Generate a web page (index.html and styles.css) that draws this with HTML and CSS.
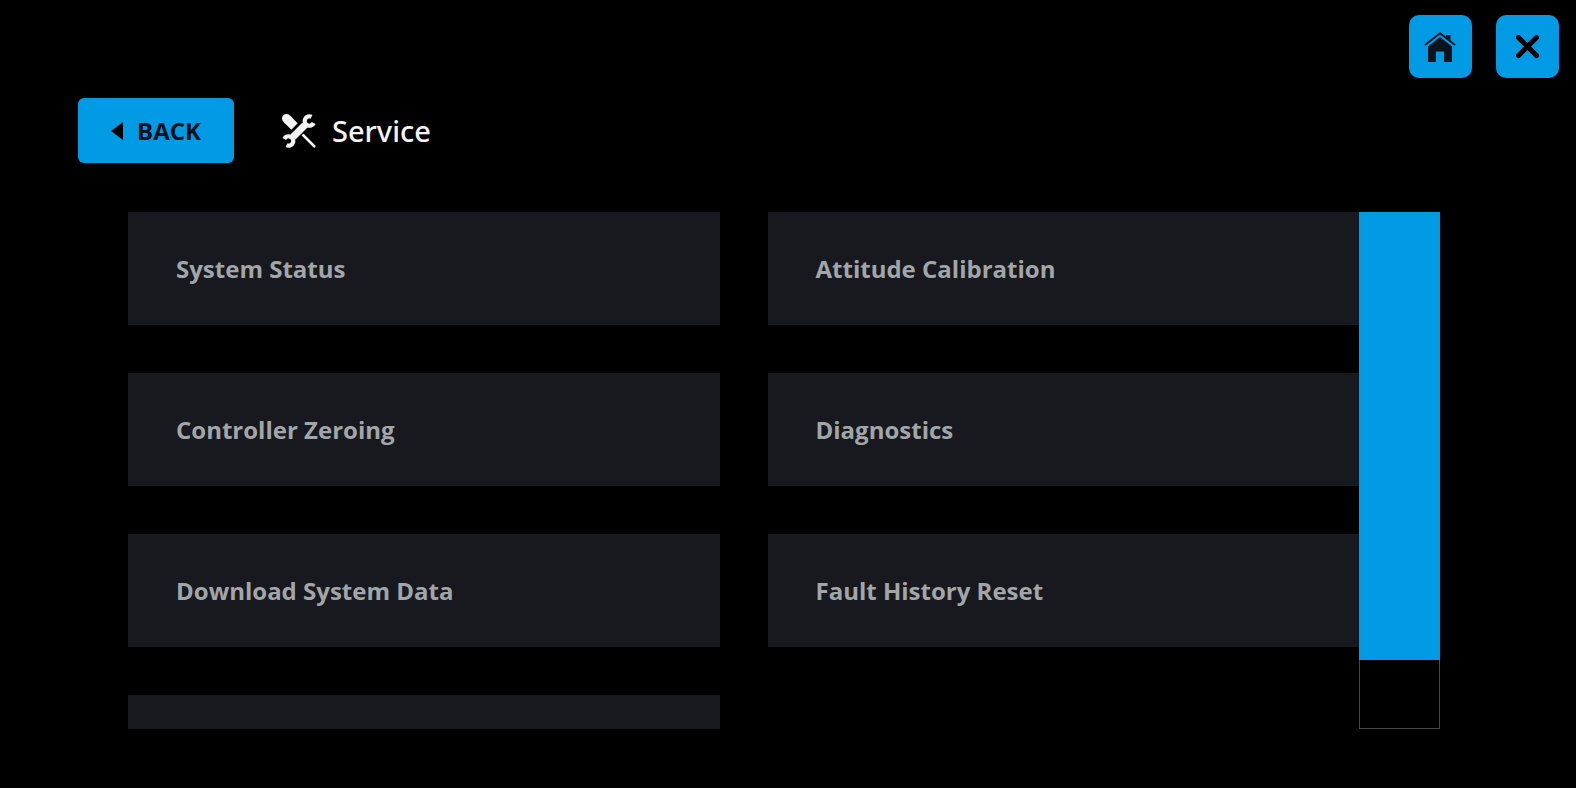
FILE: index.html
```html
<!DOCTYPE html>
<html lang="en">
<head>
<meta charset="utf-8">
<meta name="viewport" content="width=device-width, initial-scale=1">
<title>Service</title>
<link rel="stylesheet" href="styles.css">
</head>
<body class="screen">
<nav class="topbar">
  <button class="icon-button" type="button" aria-label="Home">
    <svg class="home-icon" viewBox="0 0 32 30" aria-hidden="true">
      <path d="M21 3h4.500v7L21 6z"/>
      <path d="M3 14.500 15 5l12 9.500V30h-8V19.500h-8V30H3z"/>
      <path class="roof" d="M0 13 15 1.200 30 13"/>
    </svg>
  </button>
  <button class="icon-button" type="button" aria-label="Close">
    <svg class="close-icon" viewBox="0 0 24 24" aria-hidden="true"><path d="M2.500 2.500l18 18M20.500 2.500l-18 18"/></svg>
  </button>
</nav>
<header class="header">
  <button class="back" type="button">
    <svg class="back-icon" viewBox="0 0 12 18" aria-hidden="true"><path d="M12 0v18L0 9z"/></svg>
    BACK
  </button>
  <h1 class="title">
    <svg class="tools-icon" viewBox="0 0 34 34" aria-hidden="true">
      <path class="handle" d="M4.500 4.500l2 2"/>
      <path class="handle-end" d="M5 5l7.500 7.500"/>
      <path class="blade" d="M18 18l15 15"/>
      <path class="gap" d="M10 24 24 10"/>
      <path class="wrench" d="M11 23l12-12"/>
      <path class="jaw" d="M29.500 2.800a4.700 4.700 0 1 0 2.200 6.200"/>
      <path class="jaw" d="M2.300 25a4.700 4.700 0 1 1 2.200 6.200"/>
    </svg>
    Service
  </h1>
</header>
<main class="panel">
  <div class="list">
    <button class="card" type="button">System Status</button>
    <button class="card" type="button">Attitude Calibration</button>
    <button class="card" type="button">Controller Zeroing</button>
    <button class="card" type="button">Diagnostics</button>
    <button class="card" type="button">Download System Data</button>
    <button class="card" type="button">Fault History Reset</button>
    <div class="card"></div>
  </div>
  <div class="scrollbar"><div class="thumb"></div></div>
</main>
</body>
</html>
```
FILE: styles.css
```css
* { box-sizing: border-box; }

.screen {
  margin: 0;
  height: 100vh;
  display: flex;
  flex-direction: column;
  background: #000;
  color: #f5f5f5;
  font-family: "Open Sans", "Noto Sans", sans-serif;
}

button {
  border: 0;
  font-family: inherit;
  cursor: pointer;
}

.topbar {
  display: flex;
  justify-content: flex-end;
  gap: 24px;
  padding: 15px 17px 20px;
}

.icon-button {
  display: flex;
  align-items: center;
  justify-content: center;
  width: 63px;
  height: 63px;
  padding: 0;
  border-radius: 10px;
  background: #009ae5;
}

.home-icon { width: 32px; height: 30px; fill: #0c141b; overflow: visible; }
.roof { fill: none; stroke: #0c141b; stroke-width: 1.800; }
.close-icon { width: 24px; height: 24px; stroke: #000; stroke-width: 5; stroke-linecap: round; }

.header {
  display: flex;
  align-items: center;
  gap: 48px;
  padding: 0 78px;
}

.back {
  display: flex;
  align-items: center;
  justify-content: center;
  gap: 14px;
  width: 156px;
  height: 65px;
  padding: 0;
  border-radius: 6px;
  background: #009ae5;
  color: #04101a;
  font-size: 24px;
  font-weight: 700;
}

.back-icon { width: 12px; height: 18px; }

.title {
  display: flex;
  align-items: center;
  gap: 16px;
  margin: 0;
  font-family: "Noto Sans", "Open Sans", sans-serif;
  font-size: 29px;
  font-weight: 500;
}

.tools-icon { width: 34px; height: 34px; fill: none; stroke: #f5f5f5; }
.handle { stroke-width: 9; stroke-linecap: round; }
.handle-end { stroke-width: 9; }
.blade { stroke-width: 2.500; }
.gap { stroke: #000; stroke-width: 10; }
.wrench { stroke-width: 7; }
.jaw { stroke-width: 4.200; }

.panel {
  flex: 1;
  min-height: 0;
  display: flex;
  margin: 49px 136px 59px 128px;
}

.list {
  flex: 1;
  display: grid;
  grid-template-columns: 1fr 1fr;
  grid-auto-rows: 113px;
  gap: 48px;
  overflow: hidden;
}

.card {
  padding: 0 48px;
  background: #17191e;
  color: #a2a6a8;
  font-size: 24px;
  font-weight: 700;
  text-align: left;
}

.scrollbar {
  width: 81px;
  border: 1px solid #4a4a46;
}

.thumb {
  height: 87%;
  margin: -1px -1px 0;
  background: #009ae5;
}
```
